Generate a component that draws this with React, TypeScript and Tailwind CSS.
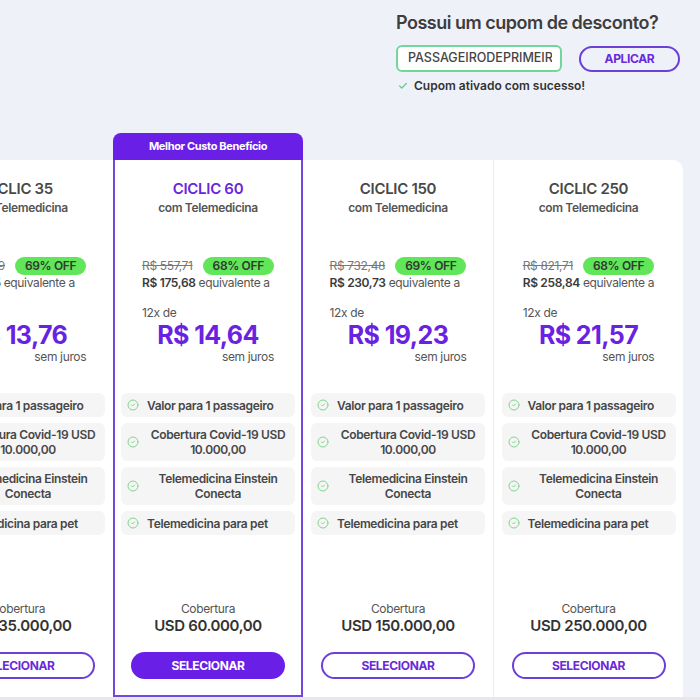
import React from "react";
import { Check, CircleCheck } from "lucide-react";

type Plan = {
  name: string;
  old: string;
  off: string;
  total: string;
  monthly: string;
  coverage: string;
  featured?: boolean;
};

const plans: Plan[] = [
  { name: "CICLIC 35", old: "R$ 532,79", off: "69% OFF", total: "R$ 165,15", monthly: "R$ 13,76", coverage: "USD 35.000,00" },
  { name: "CICLIC 60", old: "R$ 557,71", off: "68% OFF", total: "R$ 175,68", monthly: "R$ 14,64", coverage: "USD 60.000,00", featured: true },
  { name: "CICLIC 150", old: "R$ 732,48", off: "69% OFF", total: "R$ 230,73", monthly: "R$ 19,23", coverage: "USD 150.000,00" },
  { name: "CICLIC 250", old: "R$ 821,71", off: "68% OFF", total: "R$ 258,84", monthly: "R$ 21,57", coverage: "USD 250.000,00" },
];

const features = [
  "Valor para 1 passageiro",
  "Cobertura Covid-19 USD 10.000,00",
  "Telemedicina Einstein Conecta",
  "Telemedicina para pet",
];

function CardBody({ plan }: { plan: Plan }) {
  return (
    <div className="flex h-full flex-col">
      <div
        className={
          "pt-[19px] text-center text-[15px] font-semibold leading-[20px] tracking-[-0.3px] " +
          (plan.featured ? "text-[#6a25dc]" : "text-[#484848]")
        }
      >
        {plan.name}
      </div>
      <div className="mt-[1px] text-center text-[12px] font-semibold leading-[16px] text-[#555]">
        com Telemedicina
      </div>

      <div className="mx-auto mt-[41px] flex w-fit flex-col">
        <div className="flex h-[18px] items-center gap-[10px]">
          <span className="text-[12px] leading-[16px] text-[#777] line-through">{plan.old}</span>
          <span className="flex h-[18px] items-center rounded-full bg-[#61e65a] px-[10px] text-[12px] font-semibold text-[#2f3a2f]">
            {plan.off}
          </span>
        </div>
        <div className="text-[12px] leading-[16px] text-[#555]">
          <span className="font-semibold text-[#3a3a3a]">{plan.total}</span> equivalente a
        </div>
        <div className="mt-[14px] text-[12px] leading-[16px] text-[#555]">12x de</div>
        <div className="text-center text-[25px] font-bold leading-[28px] tracking-[-0.6px] text-[#6a22e2]">
          {plan.monthly}
        </div>
        <div className="text-right text-[12px] leading-[16px] text-[#555]">sem juros</div>
      </div>

      <div className="mx-auto mt-[28px] flex w-[174px] flex-col gap-[6px]">
        {features.map((f) => (
          <div
            key={f}
            className="flex min-h-[24px] items-center gap-[8px] rounded-[6px] bg-[#f5f5f6] py-[4px] pl-[6px] pr-[6px]"
          >
            <CircleCheck size={12} strokeWidth={2} className="shrink-0 text-[#7fd68b]" />
            <span className="text-center text-[12px] font-semibold leading-[15px] text-[#474747]">
              {f}
            </span>
          </div>
        ))}
      </div>

      <div className="flex-1" />

      <div className="text-center text-[12px] leading-[16px] text-[#555]">Cobertura</div>
      <div className="text-center text-[15px] font-semibold leading-[18px] text-[#333]">
        {plan.coverage}
      </div>
      <div className={"mx-auto mt-[17px] w-[154px] " + (plan.featured ? "mb-[16px]" : "mb-[18px]")}>
        {plan.featured ? (
          <div className="flex h-[27px] items-center justify-center rounded-full bg-[#6a1fe6] text-[12px] font-bold text-white">
            SELECIONAR
          </div>
        ) : (
          <div className="flex h-[27px] items-center justify-center rounded-full border-2 border-[#6b3fd8] bg-white text-[12px] font-bold text-[#6a2ad8]">
            SELECIONAR
          </div>
        )}
      </div>
    </div>
  );
}

export default function App() {
  return (
    <div className="relative flex h-[700px] w-[700px] flex-col overflow-hidden bg-[#eff1f9] font-['Inter',sans-serif] tracking-[-0.35px]">
      <div className="h-[133px] shrink-0 pl-[396px] pt-[12px]">
        <div className="text-[18px] font-semibold leading-[22px] tracking-[-0.5px] text-[#3d3d3d]">
          Possui um cupom de desconto?
        </div>
        <div className="mt-[11px] flex items-center gap-[17px]">
          <div className="flex h-[27px] w-[166px] items-center rounded-[6px] border-2 border-[#72d69b] bg-white pl-[10px] pr-[8px]">
            <div className="overflow-hidden whitespace-nowrap text-[12.5px] font-medium tracking-normal text-[#444]">
              PASSAGEIRODEPRIMEIRA
            </div>
          </div>
          <div className="flex h-[26px] w-[101px] items-center justify-center rounded-full border-2 border-[#6b3fd8] text-[12px] font-bold text-[#6a2ad8]">
            APLICAR
          </div>
        </div>
        <div className="mt-[6px] flex items-center gap-[6px] pl-[2px] text-[12px] font-semibold leading-[16px] tracking-normal text-[#333]">
          <Check size={10} strokeWidth={3} className="text-[#5fcb8a]" />
          Cupom ativado com sucesso!
        </div>
      </div>

      <div className="ml-[-77px] flex h-[564px] shrink-0 items-end">
        {plans.map((p, i) =>
          p.featured ? (
            <div key={p.name} className="flex h-[564px] w-[190px] shrink-0 flex-col">
              <div className="flex h-[27px] items-center justify-center rounded-t-[8px] bg-[#6a1fe6] text-[11px] font-bold text-white">
                Melhor Custo Benefício
              </div>
              <div className="flex-1 border-2 border-t-0 border-[#7447e0] bg-white">
                <CardBody plan={p} />
              </div>
            </div>
          ) : (
            <div
              key={p.name}
              className={
                "h-[537px] w-[190px] shrink-0 bg-white " +
                (i === 3 ? "rounded-tr-[10px] border-l border-[#ececf0]" : "")
              }
            >
              <CardBody plan={p} />
            </div>
          )
        )}
      </div>
      <div className="h-[3px] bg-[#e7e7ec]" />
    </div>
  );
}
